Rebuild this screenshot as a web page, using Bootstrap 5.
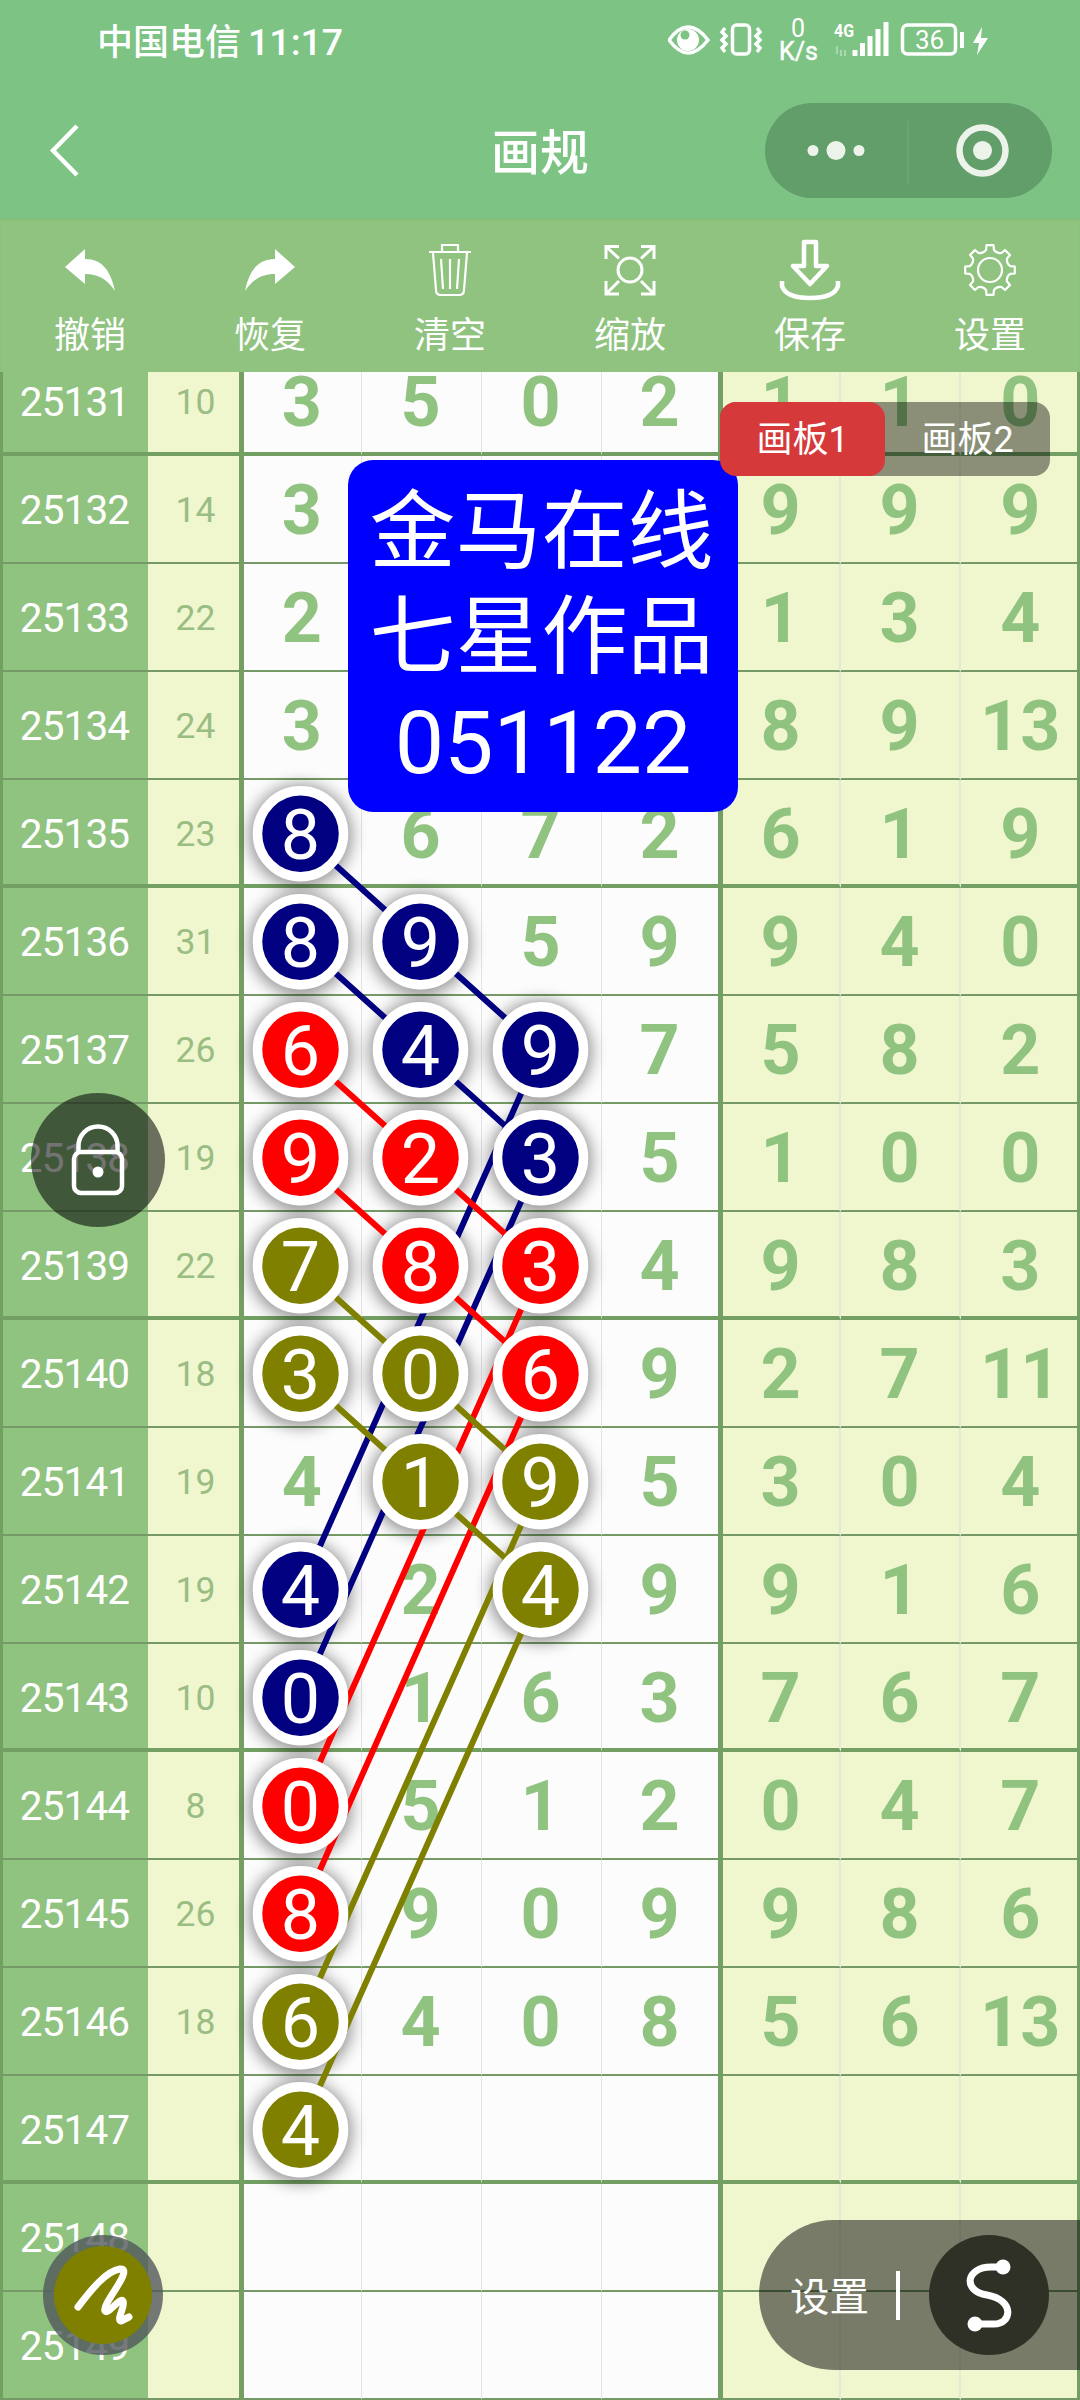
<!DOCTYPE html>
<html lang="zh-CN">
<head>
<meta charset="utf-8">
<meta name="viewport" content="width=device-width, initial-scale=1">
<title>画规</title>
<link rel="stylesheet" href="https://cdn.jsdelivr.net/npm/bootstrap@5.3.0/dist/css/bootstrap.min.css">
<style>
body{width:1080px;height:2400px;overflow:hidden;font-family:Roboto,"Noto Sans CJK SC",sans-serif;background:#7cc384;color:#fff;line-height:1}
svg{display:block;flex:none}
.status{height:80px;padding-left:97px}
.carrier{font-size:36px;font-weight:500;line-height:84px;width:571px;white-space:nowrap}
.carrier span{font-size:37.5px;margin-left:7px}
.titlebar{height:138px;display:grid;grid-template-columns:1fr auto 1fr}
.titlebar h1{font-size:49px;font-weight:500;margin:11px 0 0}
.capsule{width:287px;height:95px;border-radius:48px;background:#619e6a;margin-right:28px;margin-top:3px}
.tools{height:154px;background:#8fc37f;box-shadow:inset 0 2px 2px #84bd7c}
.tool{width:180px;padding-top:20px}
.tool span{font-size:36px;line-height:40px;margin-top:14px}
.board{height:2028px;overflow:hidden}
.draw{height:108px;display:grid;grid-template-rows:100%;grid-template-columns:148px 96px 117.5px 120px 120px 121px 118px 120px 119.5px;line-height:108px;text-align:center}
.draw:first-child{height:84px}
.draw:first-child>div{line-height:60px}
.draw>div{border-bottom:2px solid #759a67;height:100%}
.draw.heavy>div{border-bottom:4px solid #739f63}
.issue{background:#8fc37f;font-size:40.5px;font-weight:400;letter-spacing:-.9px;padding-right:2px;border-left:3px solid #739f63}
.sum{background:#f0f7cf;color:#9abd83;font-size:35.5px;font-weight:400;padding-left:4px;border-right:5px solid #739f63}
.num{background:#fcfcfc;color:#8fc37f;font-size:70px;font-weight:700;padding-right:1px;border-right:1px solid #e4e4e8}
.num.lastn{padding-right:0;border-right:5px solid #739f63}
.tail{background:#f0f7cf;color:#8fc37f;font-size:70px;font-weight:700;border-right:2px solid #e5e9d3}
.tail.lastt{border-right:3px solid #739f63;padding-left:3px}
.overlay{left:0;top:0;pointer-events:none}
.stamp{left:348px;top:88px;width:390px;height:352px;border-radius:25px;background:#00f;font-size:86px;line-height:105px;padding-top:20px;text-align:center;white-space:nowrap}
.stamp div{margin-left:-3px}
.stamp b{font-weight:400;font-size:88px}
.boards{left:720px;top:30px;width:330px;height:74px;border-radius:16px;background:rgba(0,0,0,.42);font-size:36px;line-height:76px;text-align:center}
.boards .on{background:#d5393a;border-radius:16px}
.lock{left:31px;top:721px;width:134px;height:134px;background:rgba(0,0,0,.55)}
.pen{left:43px;top:1863px;width:120px;height:120px;background:rgba(80,85,90,.78)}
.pen>div{width:98px;height:98px;background:#808000}
.dock{right:0;top:1848px;width:321px;height:150px;border-radius:75px 0 0 75px;background:rgba(0,0,0,.5);font-size:39.5px;padding-left:31px}
.dock span{margin-top:5px}
.dock i{width:3.5px;height:49px;background:#fff;margin:0 29px 0 27px}
.dock .curve{width:120px;height:120px;background:#303126}
</style>
<script src="https://cdn.jsdelivr.net/npm/bootstrap@5.3.0/dist/js/bootstrap.bundle.min.js"></script>
</head>
<body>
<header class="status d-flex">
  <div class="carrier">中国电信<span>11:17</span></div>
  <svg width="330" height="80" viewBox="668 0 330 80" fill="none" stroke="#fff" stroke-width="3.5">
    <path d="M669 40Q688 14 708 40Q688 66 669 40Z"/><circle cx="688" cy="40" r="11" fill="#fff" stroke="none"/><circle cx="685" cy="35" r="4.5" fill="#7cc384" stroke="none"/>
    <rect x="732.500" y="25" width="17" height="29" rx="4"/><path d="M725 28l-3 4 4 4-4 4 4 4-4 4 3 4M757 28l3 4-4 4 4 4-4 4 4 4-3 4"/>
    <g fill="#fff" stroke="none" font-family="Roboto,sans-serif"><text x="791" y="37" font-size="25">0</text><text x="779" y="60" font-size="25" stroke="#fff" stroke-width=".5">K/s</text><text x="834" y="37" font-size="19" font-weight="700" textLength="20" lengthAdjust="spacingAndGlyphs">4G</text><text x="915" y="49" font-size="26">36</text></g>
    <path d="M837 46v8m4-4v6m4-6v6" stroke-width="2" opacity=".35"/>
    <path d="M855 56v-6M862.500 56v-13M870 56v-20M878 56v-27M886 56v-34" stroke-width="5"/>
    <rect x="902.500" y="25" width="53" height="29" rx="5"/><path d="M962 32v16" stroke-width="4"/><path d="M982 27l-9 16h6l-2 12 11-17h-7z" fill="#fff" stroke="none"/>
  </svg>
</header>
<nav class="titlebar align-items-center">
  <svg width="34" height="54" style="margin:4px 0 0 49px" viewBox="0 0 34 54" fill="none" stroke="#fff" stroke-width="4.500"><path d="M28 2L4 26.500L28 51"/></svg>
  <h1>画规</h1>
  <div class="capsule ms-auto"><svg width="287" height="95" fill="#ecf3eb"><circle cx="48" cy="47.500" r="5.500"/><circle cx="71" cy="47.500" r="9.500"/><circle cx="94" cy="47.500" r="5.500"/><path d="M143 18v63" stroke="#69a672" stroke-width="2"/><circle cx="217.500" cy="47.500" r="9.500"/><circle cx="217.500" cy="47.500" r="23" fill="none" stroke="#ecf3eb" stroke-width="6.500"/></svg></div>
</nav>
<section class="tools d-flex">
  <div class="tool d-flex flex-column align-items-center"><svg width="64" height="64" fill="#fff"><path d="M7 29L27 11v10C45 21 53 34 57 53C49 41 40 36 27 36v10z"/></svg><span>撤销</span></div>
  <div class="tool d-flex flex-column align-items-center"><svg width="64" height="64" fill="#fff"><path d="M57 29L37 11v10C19 21 11 34 7 53C15 41 24 36 37 36v10z"/></svg><span>恢复</span></div>
  <div class="tool d-flex flex-column align-items-center"><svg width="64" height="64" fill="none" stroke="#fff" stroke-width="2.200"><path d="M11 14h42M24 14V7h16v7M15 15l3 37q0 5 5 5h18q5 0 5-5l3-37M23 21l2 30M32 21v30M41 21l-2 30"/></svg><span>清空</span></div>
  <div class="tool d-flex flex-column align-items-center"><svg width="64" height="64" fill="none" stroke="#fff" stroke-width="3"><circle cx="32" cy="32" r="12"/><path d="M8 21V8.500h13M8 8.500l13 12M43 8.500h13V21M56 8.500l-13 12M8 43v13h13M8 56l13-13M56 43v13H43M56 56L43 43"/></svg><span>缩放</span></div>
  <div class="tool d-flex flex-column align-items-center"><svg width="64" height="64" fill="none" stroke="#fff" stroke-width="4.500" stroke-linejoin="round"><path d="M26 4h12v24h11L32 46L15 28h11zM4 43v5Q8 60 32 60T60 48v-5"/></svg><span>保存</span></div>
  <div class="tool d-flex flex-column align-items-center"><svg width="64" height="64" fill="none" stroke="#fff" stroke-width="2.200"><circle cx="32" cy="32" r="12"/><path id="gear" stroke-linejoin="round"/></svg><span>设置</span></div>
</section>
<main class="board position-relative">
  <div id="rows"></div>
  <svg class="overlay position-absolute" id="marks" width="1080" height="2028" viewBox="0 372 1080 2028"></svg>
  <div class="stamp position-absolute"><div>金马在线<br>七星作品</div><b>051122</b></div>
  <div class="boards position-absolute d-flex"><div class="on w-50">画板1</div><div class="w-50">画板2</div></div>
  <div class="lock position-absolute rounded-circle d-flex align-items-center justify-content-center"><svg width="56" height="72" fill="none" stroke="#fff" stroke-width="4.500"><rect x="4" y="28" width="48" height="41" rx="7"/><path d="M8.500 28V22a19.500 19.500 0 0 1 39 0v6"/><circle cx="28" cy="48" r="5.500" fill="#fff" stroke="none"/></svg></div>
  <div class="pen position-absolute rounded-circle d-flex align-items-center justify-content-center"><div class="rounded-circle"><svg width="98" height="98" fill="none" stroke="#fff" stroke-width="7" stroke-linecap="round" stroke-linejoin="round"><path d="M24 61C37 44 52 25 66 23C81 22 47 59 51 65C54 69 66 51 69 55C72 60 62 73 67 75L75 71"/></svg></div></div>
  <div class="dock position-absolute d-flex align-items-center"><span>设置</span><i></i><div class="curve rounded-circle"><svg width="120" height="120" fill="none" stroke="#fff" stroke-width="7"><path d="M73 32H62C37 32 33 56 58 60C86 65 83 89 65 89H46"/><circle cx="74" cy="32" r="7.500" fill="#fff" stroke="none"/><circle cx="46" cy="89" r="7.500" fill="#fff" stroke="none"/></svg></div></div>
</main>
<script>
// issue, digit sum, four digits, three tail values
const draws=`25131 10 3 5 0 2 1 1 0
25132 14 3 - - - 9 9 9
25133 22 2 - - - 1 3 4
25134 24 3 - - - 8 9 13
25135 23 - 6 7 2 6 1 9
25136 31 - - 5 9 9 4 0
25137 26 - - - 7 5 8 2
25138 19 - - - 5 1 0 0
25139 22 - - - 4 9 8 3
25140 18 - - - 9 2 7 11
25141 19 4 - - 5 3 0 4
25142 19 - 2 - 9 9 1 6
25143 10 - 1 6 3 7 6 7
25144 8 - 5 1 2 0 4 7
25145 26 - 9 0 9 9 8 6
25146 18 - 4 0 8 5 6 13
25147 - - - - - - - -
25148 - - - - - - - -
25149 - - - - - - - -`.split('\n').map(l=>l.split(' '));
const kinds=['issue','sum','num','num','num','num lastn','tail','tail','tail lastt'];
document.getElementById('rows').innerHTML=draws.map((r,i)=>`<div class="draw${i%4==0?' heavy':''}">`+r.map((v,c)=>`<div class="${kinds[c]}">${v=='-'?'':v}</div>`).join('')+'</div>').join('');
// chains: colour, then [issue, column, digit] nodes
const chains=[
['#000080',[[35,0,8],[36,1,9],[37,2,9],[42,0,4]]],
['#000080',[[36,0,8],[37,1,4],[38,2,3],[43,0,0]]],
['#ff0000',[[37,0,6],[38,1,2],[39,2,3],[44,0,0]]],
['#ff0000',[[38,0,9],[39,1,8],[40,2,6],[45,0,8]]],
['#808000',[[39,0,7],[40,1,0],[41,2,9],[46,0,6]]],
['#808000',[[40,0,3],[41,1,1],[42,2,4],[47,0,4]]]];
const X=c=>300.5+120*c, Y=n=>833.7+108*(n-35);
let glow='',links='',nodes='';
for(const [col,pts] of chains){
  links+=`<polyline points="${pts.map(p=>X(p[1])+','+Y(p[0])).join(' ')}" fill="none" stroke="${col}" stroke-width="6"/>`;
  for(const [n,c,d] of pts){
    glow+=`<circle cx="${X(c)}" cy="${Y(n)+2}" r="51" fill="#000" opacity=".42" filter="url(#soft)"/>`;
    nodes+=`<circle cx="${X(c)}" cy="${Y(n)}" r="43" fill="${col}" stroke="#fff" stroke-width="9.5"/><text x="${X(c)}" y="${Y(n)+25}" text-anchor="middle">${d}</text>`;
  }
}
document.getElementById('marks').innerHTML=`<defs><filter id="soft" x="-40%" y="-40%" width="180%" height="180%"><feGaussianBlur stdDeviation="8"/></filter></defs>${glow}${links}<g fill="#fff" font-size="70" font-family="Roboto">${nodes}</g>`;
// eight rounded gear teeth
let g='';
for(let k=0;k<8;k++){
  const P=(a,r)=>{const t=(k*45+a)*Math.PI/180;return (32+r*Math.cos(t)).toFixed(1)+' '+(32+r*Math.sin(t)).toFixed(1)};
  g+=(k?'L':'M')+P(-11,20.5)+'L'+P(-8,25)+'L'+P(8,25)+'L'+P(11,20.5)+'Q'+P(22.5,17.5)+' '+P(34,20.5);
}
document.getElementById('gear').setAttribute('d',g+'Z');
</script>
</body>
</html>
